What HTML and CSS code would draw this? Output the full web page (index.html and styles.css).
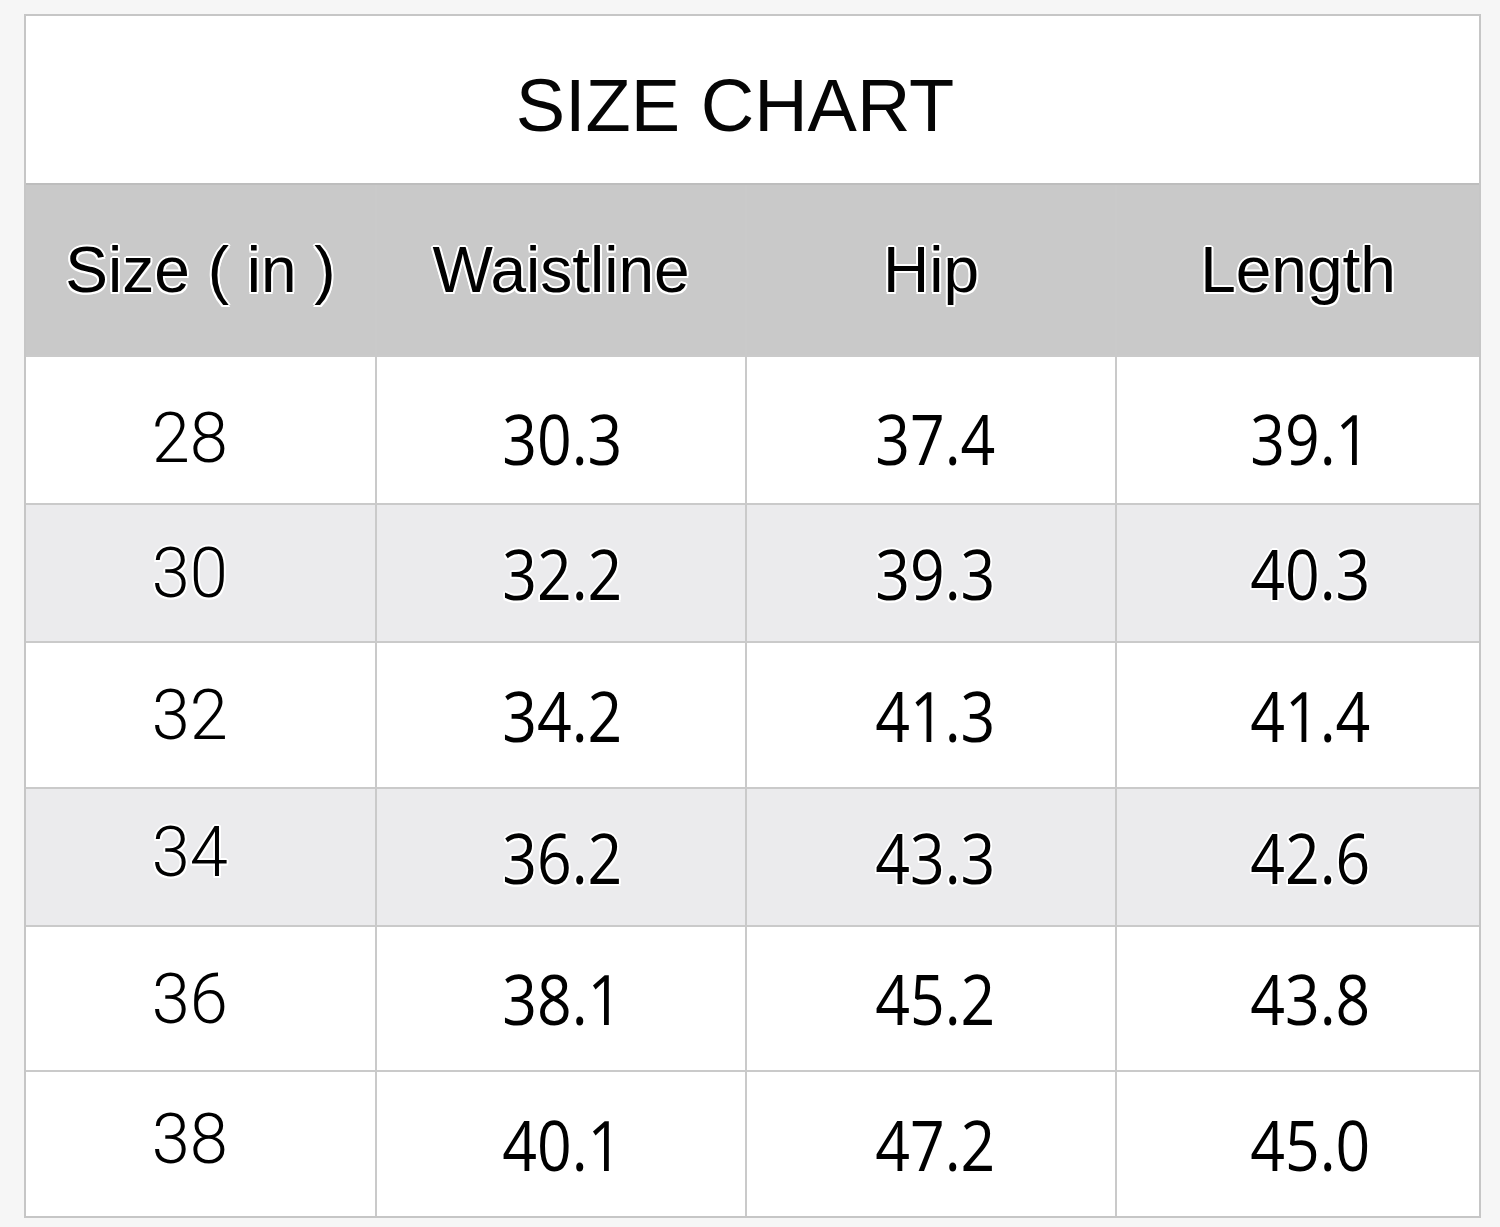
FILE: index.html
```html
<!DOCTYPE html>
<html lang="en">
<head>
<meta charset="utf-8">
<title>Size Chart</title>
<link rel="stylesheet" href="styles.css">
</head>
<body>
<div class="chart">
  <div class="title">SIZE CHART</div>
  <div class="grid">
    <div class="cell head c1"><span>Size ( in )</span></div>
    <div class="cell head c2"><span>Waistline</span></div>
    <div class="cell head c3"><span>Hip</span></div>
    <div class="cell head c4"><span>Length</span></div>

    <div class="cell r1 c1 size"><span>28</span></div>
    <div class="cell r1 c2 num"><span>30.3</span></div>
    <div class="cell r1 c3 num"><span>37.4</span></div>
    <div class="cell r1 c4 num"><span>39.1</span></div>

    <div class="cell alt c1 size"><span>30</span></div>
    <div class="cell alt c2 num"><span>32.2</span></div>
    <div class="cell alt c3 num"><span>39.3</span></div>
    <div class="cell alt c4 num"><span>40.3</span></div>

    <div class="cell c1 size"><span>32</span></div>
    <div class="cell c2 num"><span>34.2</span></div>
    <div class="cell c3 num"><span>41.3</span></div>
    <div class="cell c4 num"><span>41.4</span></div>

    <div class="cell alt c1 size up"><span>34</span></div>
    <div class="cell alt c2 num"><span>36.2</span></div>
    <div class="cell alt c3 num"><span>43.3</span></div>
    <div class="cell alt c4 num"><span>42.6</span></div>

    <div class="cell c1 size"><span>36</span></div>
    <div class="cell c2 num"><span>38.1</span></div>
    <div class="cell c3 num"><span>45.2</span></div>
    <div class="cell c4 num"><span>43.8</span></div>

    <div class="cell c1 size up"><span>38</span></div>
    <div class="cell c2 num"><span>40.1</span></div>
    <div class="cell c3 num"><span>47.2</span></div>
    <div class="cell c4 num"><span>45.0</span></div>
  </div>
</div>
</body>
</html>
```

FILE: styles.css
```css
html, body {
  margin: 0;
  padding: 0;
  background: #f6f6f6;
}

body {
  width: 1500px;
  height: 1227px;
  overflow: hidden;
  font-family: "Liberation Sans", Arial, sans-serif;
  color: #000;
}

.chart {
  margin: 14px 0 0 24px;
  width: 1457px;
  box-sizing: border-box;
  border: 2px solid #c6c6c6;
  background: #fff;
}

.title {
  height: 167px;
  box-sizing: border-box;
  display: flex;
  align-items: center;
  justify-content: center;
  padding: 12px 35px 0 0;
  font-size: 74px;
  line-height: 1;
  color: #050505;
}

.grid {
  display: grid;
  grid-template-columns: 349px 368px 368px 1fr;
  grid-template-rows: 170px 146px 136px 144px 136px 143px 144px;
  gap: 2px;
  border-top: 2px solid #bdbdbd;
  background: #cacaca;
}

.cell {
  display: flex;
  align-items: center;
  justify-content: center;
  background: #fff;
  line-height: 1;
  text-shadow: 2px 0 0 #fff, -2px 0 0 #fff, 0 2px 0 #fff, 0 -2px 0 #fff,
    1.5px 1.5px 0 #fff, -1.5px 1.5px 0 #fff, 1.5px -1.5px 0 #fff, -1.5px -1.5px 0 #fff;
}

.cell span {
  display: inline-block;
  white-space: pre;
}

.head {
  background: #c9c9c9;
  font-family: "Liberation Sans", Arial, sans-serif;
  font-size: 64px;
}

.alt {
  background: #ebebed;
}

.r1 {
  padding-top: 16px;
}

.size {
  font-family: Roboto, "Liberation Sans", sans-serif;
  font-weight: 300;
  font-size: 70px;
  padding-right: 22px;
}

.size span {
  transform: scaleX(0.98);
}

.up {
  padding-bottom: 10px;
}

.num {
  font-family: "Open Sans", "Liberation Sans", sans-serif;
  font-size: 69px;
}

.num span {
  transform: scaleX(0.88);
}

.num.c2 {
  padding-left: 2px;
}

.num.c3 {
  padding-left: 8px;
}

.num.c4 {
  padding-left: 24px;
}
```
